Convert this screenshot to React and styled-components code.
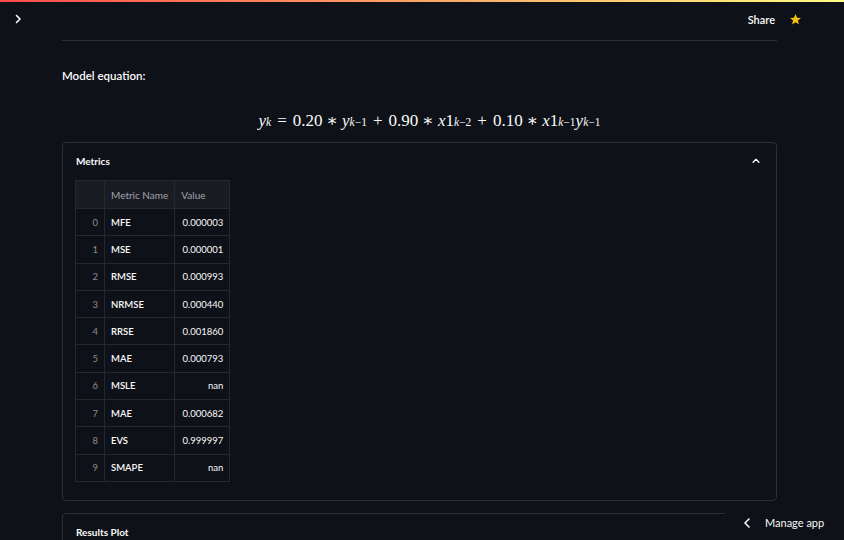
import React from "react";
import styled, { createGlobalStyle } from "styled-components";

const Global = createGlobalStyle`
  html, body {
    margin: 0;
    padding: 0;
    background: #0e1117;
    overflow: hidden;
  }
  body {
    font-family: Lato, "Noto Sans", sans-serif;
    color: #fafafa;
  }
`;

const Page = styled.div`
  position: relative;
  width: 844px;
  height: 540px;
  overflow: hidden;
  background: #0e1117;
`;

const Decoration = styled.div`
  height: 2px;
  background: linear-gradient(90deg, #ff4b4b, #fffd80);
`;

const Header = styled.header`
  display: flex;
  align-items: center;
  justify-content: space-between;
  height: 34px;
  padding: 0 42px 0 12px;
`;

const IconButton = styled.button`
  display: flex;
  align-items: center;
  justify-content: center;
  background: none;
  border: 0;
  padding: 0;
  color: #fafafa;
  width: 12px;
  height: 12px;
`;

const HeaderRight = styled.div`
  display: flex;
  align-items: center;
  gap: 14px;
  font-size: 11px;
  font-weight: 600;
`;

const Main = styled.main`
  width: 715px;
  margin-left: 62px;
`;

const Divider = styled.hr`
  border: 0;
  border-top: 1px solid #2c2f37;
  margin: 4px 0 0;
`;

const Label = styled.p`
  margin: 28px 0 0;
  font-size: 11.5px;
  font-weight: 600;
  color: #fafafa;
`;

const Equation = styled.div`
  display: flex;
  justify-content: center;
  align-items: baseline;
  margin: 28px 0 11px;
  padding-left: 20px;
  font-family: "Liberation Serif", "DejaVu Serif", serif;
  font-size: 17px;
  color: #fafafa;

  i {
    font-style: italic;
  }
  sub {
    font-size: 11.5px;
    vertical-align: -3px;
    line-height: 0;
  }
  .op {
    margin: 0 6px;
  }
  .op-s {
    margin: 0 4px;
  }
`;

const Expander = styled.section`
  border: 1px solid #2c2f37;
  border-radius: 4px;
  padding: ${(p) => (p.$open ? "10px 13px 18px 12px" : "10px 13px 14px 12px")};
  margin-bottom: ${(p) => (p.$open ? "12px" : "0")};
`;

const ExpanderHead = styled.div`
  display: flex;
  align-items: center;
  justify-content: space-between;
  height: 16px;
  font-size: 10px;
  font-weight: 700;
  padding-left: 1px;
  padding-right: 2px;
  margin-bottom: ${(p) => (p.$open ? "11px" : "0")};
`;

const Table = styled.table`
  border-collapse: collapse;
  font-size: 9.5px;
  color: #fafafa;
  table-layout: fixed;

  th, td {
    border: 1px solid #262830;
    padding: 0 6px;
    white-space: nowrap;
  }
  th {
    height: 27px;
    background: #1a1c23;
    font-weight: 400;
    font-size: 10px;
    color: #a0a3ad;
    text-align: left;
  }
  td {
    height: 26.3px;
  }
`;

const IndexCell = styled.td`
  width: 16px;
  text-align: right;
  color: #8a8d97;
`;

const NameCell = styled.td`
  width: 54px;
  font-weight: 600;
`;

const ValueCell = styled.td`
  width: 42px;
  text-align: right;
`;

const ManageApp = styled.div`
  position: absolute;
  right: 0;
  bottom: 0;
  width: 119px;
  height: 35px;
  background: #0e1117;
  display: flex;
  align-items: center;
  gap: 12px;
  padding-left: 16px;
  box-sizing: border-box;
  font-size: 11px;
  color: #fafafa;
`;

const metrics = [
  ["MFE", "0.000003"],
  ["MSE", "0.000001"],
  ["RMSE", "0.000993"],
  ["NRMSE", "0.000440"],
  ["RRSE", "0.001860"],
  ["MAE", "0.000793"],
  ["MSLE", "nan"],
  ["MAE", "0.000682"],
  ["EVS", "0.999997"],
  ["SMAPE", "nan"],
];

const Chevron = ({ dir, size = 12 }) => {
  const paths = {
    right: "M4.5 2.5l3.5 3.5-3.5 3.5",
    left: "M8 2L4 6l4 4",
    up: "M2.5 7.5L6 4l3.5 3.5",
  };
  return (
    <svg width={size} height={size} viewBox="0 0 12 12" fill="none">
      <path d={paths[dir]} stroke="currentColor" strokeWidth="1.6" strokeLinecap="round" strokeLinejoin="round" />
    </svg>
  );
};

const Star = () => (
  <svg width="13" height="13" viewBox="0 0 24 24">
    <path
      d="M12 2l2.9 6.6 7.1.6-5.4 4.7 1.6 7L12 17.3 5.8 21l1.6-7L2 9.2l7.1-.6z"
      fill="#f5c10f"
    />
  </svg>
);

const App = () => {
  return (
    <Page>
      <Global />
      <Decoration />
      <Header>
        <IconButton>
          <Chevron dir="right" />
        </IconButton>
        <HeaderRight>
          <span>Share</span>
          <Star />
        </HeaderRight>
      </Header>
      <Main>
        <Divider />
        <Label>Model equation:</Label>
        <Equation>
          <i>y</i><sub><i>k</i></sub>
          <span className="op">=</span>
          0.20<span className="op-s">∗</span><i>y</i><sub><i>k</i>−1</sub>
          <span className="op">+</span>
          0.90<span className="op-s">∗</span><i>x</i>1<sub><i>k</i>−2</sub>
          <span className="op">+</span>
          0.10<span className="op-s">∗</span><i>x</i>1<sub><i>k</i>−1</sub><i>y</i><sub><i>k</i>−1</sub>
        </Equation>
        <Expander $open>
          <ExpanderHead $open>
            <span>Metrics</span>
            <Chevron dir="up" size={10} />
          </ExpanderHead>
          <Table>
            <thead>
              <tr>
                <th style={{ width: 16 }}></th>
                <th style={{ width: 54 }}>Metric Name</th>
                <th style={{ width: 42 }}>Value</th>
              </tr>
            </thead>
            <tbody>
              {metrics.map(([name, value], i) => (
                <tr key={i}>
                  <IndexCell>{i}</IndexCell>
                  <NameCell>{name}</NameCell>
                  <ValueCell>{value}</ValueCell>
                </tr>
              ))}
            </tbody>
          </Table>
        </Expander>
        <Expander>
          <ExpanderHead>
            <span>Results Plot</span>
          </ExpanderHead>
        </Expander>
      </Main>
      <ManageApp>
        <Chevron dir="left" />
        <span>Manage app</span>
      </ManageApp>
    </Page>
  );
};

export default App;
